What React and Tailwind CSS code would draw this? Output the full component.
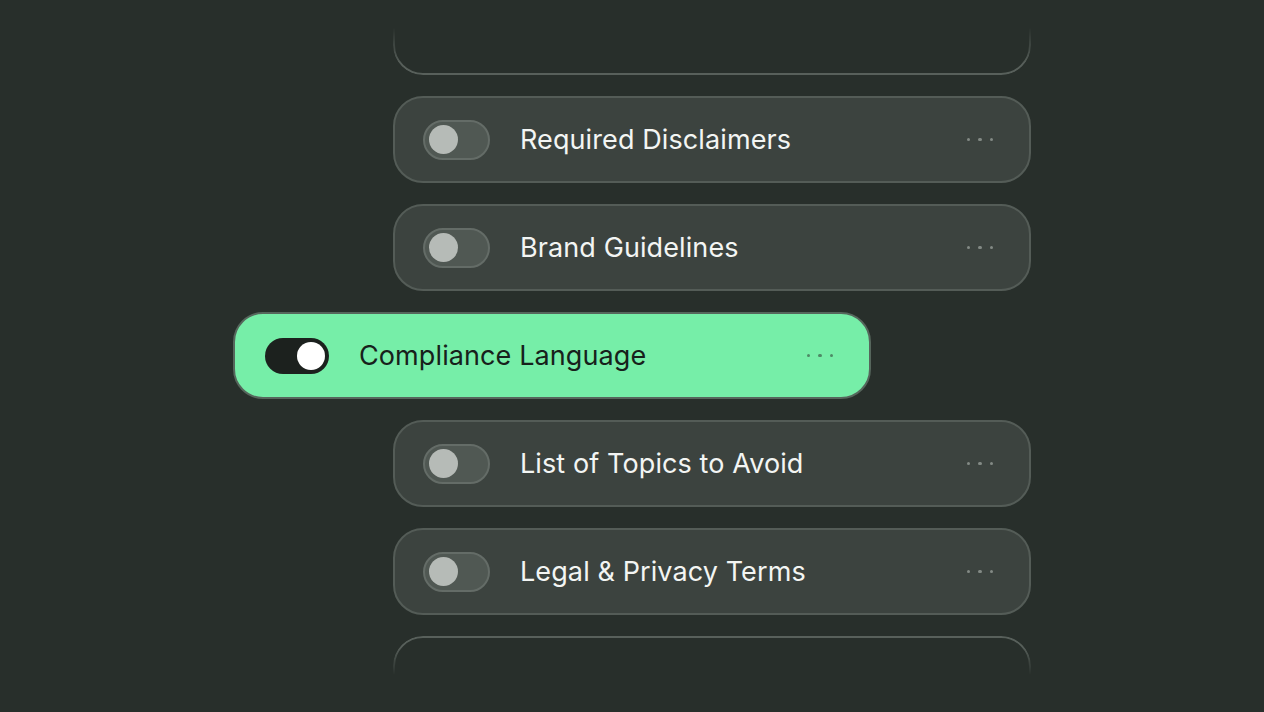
const rows = [
  { label: 'Required Disclaimers' },
  { label: 'Brand Guidelines' },
  { label: 'Compliance Language', active: true },
  { label: 'List of Topics to Avoid' },
  { label: 'Legal & Privacy Terms' },
];

const Toggle = ({ on }) =>
  on ? (
    <div className="flex h-[36px] w-[64px] shrink-0 items-center justify-end rounded-full bg-[#1c211e] px-[4px]">
      <div className="h-[28px] w-[28px] rounded-full bg-white" />
    </div>
  ) : (
    <div className="flex h-[40px] w-[67px] shrink-0 items-center rounded-full border-2 border-[#646c67] bg-[#505853] px-[4px]">
      <div className="h-[29px] w-[29px] rounded-full bg-[#b6bbb7]" />
    </div>
  );

const Dots = ({ on }) => (
  <div className="flex items-center gap-[8px]">
    {[0, 1, 2].map((i) => (
      <span
        key={i}
        className={`h-[3.5px] w-[3.5px] rounded-full ${on ? 'bg-[#4e8a66]' : 'bg-[#838a85]'}`}
      />
    ))}
  </div>
);

const Row = ({ label, active }) => (
  <div
    className={
      active
        ? 'flex h-[87px] w-[638px] -ml-[160px] items-center rounded-[30px] border-2 border-[#56665c] bg-[#76eea8] pl-[30px] pr-[36px]'
        : 'flex h-[87px] w-[638px] items-center rounded-[30px] border-2 border-[#545c57] bg-[#3c433f] pl-[28px] pr-[36px]'
    }
  >
    <Toggle on={active} />
    <span
      className={`ml-[30px] flex-1 pt-[2px] text-[27px] tracking-[0.1px] ${active ? 'text-[#17211b]' : 'text-[#f3f5f3]'}`}
    >
      {label}
    </span>
    <Dots on={active} />
  </div>
);

export default function App() {
  return (
    <div
      className="h-[712px] w-[1264px] overflow-hidden bg-[#282f2b]"
      style={{ fontFamily: 'Inter, "Noto Sans", sans-serif' }}
    >
      <div className="ml-[393px] flex flex-col gap-[21px] -mt-[12px]">
        <div className="h-[87px] w-[638px] rounded-[30px] border-2 border-[#58605b] [mask-image:linear-gradient(to_bottom,transparent_45%,black_88%)]" />
        {rows.map((r) => (
          <Row key={r.label} {...r} />
        ))}
        <div className="h-[87px] w-[638px] rounded-[30px] border-2 border-[#58605b] [mask-image:linear-gradient(to_bottom,black_12%,transparent_45%)]" />
      </div>
    </div>
  );
}
